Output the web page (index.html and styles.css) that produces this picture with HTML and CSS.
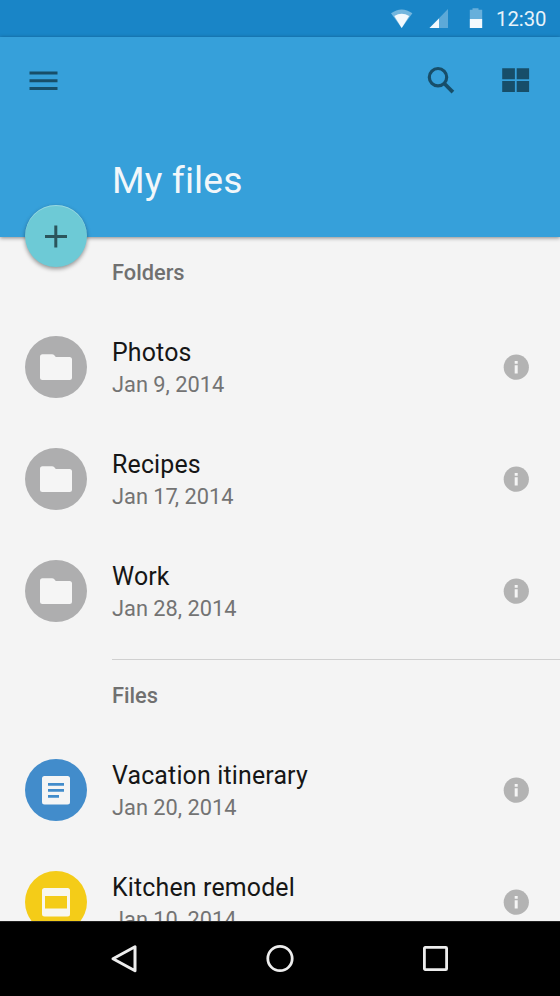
FILE: index.html
```html
<!DOCTYPE html>
<html lang="en">
<head>
<meta charset="utf-8">
<title>My files</title>
<link rel="stylesheet" href="styles.css">
</head>
<body>
<svg class="defs" aria-hidden="true">
  <symbol id="folder" viewBox="0 0 62 62"><path fill="#f5f5f5" d="M17.500 18.200h9.500q1.500 0 2.300 1l1.500 1.700H44.500q2.500 0 2.500 2.500v18.200q0 2.500-2.500 2.500H17.500q-2.500 0-2.500-2.500V20.700q0-2.500 2.500-2.500z"/></symbol>
  <symbol id="info" viewBox="0 0 26 26"><circle cx="13.300" cy="13.200" r="12.600" fill="#b3b3b3"/><path fill="#f5f5f5" d="M11.700 7h3v2.700h-3zM11.700 11.300h3v8.200h-3z"/></symbol>
</svg>
<div class="screen">
  <div class="status">
    <svg class="signals" width="96" height="37" viewBox="0 0 96 37">
      <path fill="#74b6de" d="M0 13.300Q10.700 5.500 21.400 13.300L10.700 28z"/>
      <path fill="#f3f9fd" d="M3.300 15.900Q10.700 11.500 18.200 15.900L10.700 28z"/>
      <path fill="#5ca9d8" d="M57 9v19H38.500z"/>
      <path fill="#f3f9fd" d="M48 18.500V28H38.500z"/>
      <path fill="#67afdb" d="M81.500 8.300h6v1.500h3.700V19H78.800V9.800h2.700z"/>
      <path fill="#f3f9fd" d="M78.800 19h12.400v9H78.800z"/>
    </svg>
    <span class="clock">12:30</span>
  </div>
  <header class="appbar">
    <div class="toolbar">
      <svg width="30" height="30" viewBox="0 0 30 30"><path fill="#174e69" d="M1.500 6.600h28v3h-28zM1.500 14.300h28v3h-28zM1.500 22h28v3h-28z"/></svg>
      <svg class="search" width="30" height="30" viewBox="0 0 30 30"><g fill="none" stroke="#174e69"><circle cx="13" cy="12.200" r="8.700" stroke-width="3.200"/><path stroke-width="3.800" d="M19.300 18.500l8.600 8.600"/></g></svg>
      <svg width="30" height="30" viewBox="0 0 30 30"><path fill="#174e69" d="M2.200 3.300h12.700v11H2.200zM16.700 3.300h12.400v11H16.700zM2.200 16h12.700v11H2.200zM16.700 16h12.400v11H16.700z"/></svg>
    </div>
    <h1>My files</h1>
    <div class="fab"><svg width="62" height="62" viewBox="0 0 62 62"><path fill="#2b555c" d="M29.300 20.400h3v9.500h9.700v3h-9.700v9.500h-3v-9.500H20v-3h9.300z"/></svg></div>
  </header>
  <main class="list">
    <h2>Folders</h2>
    <div class="row">
      <svg class="avatar grey"><use href="#folder"/></svg>
      <div class="label"><div class="name">Photos</div><div class="date">Jan 9, 2014</div></div>
      <svg class="info"><use href="#info"/></svg>
    </div>
    <div class="row">
      <svg class="avatar grey"><use href="#folder"/></svg>
      <div class="label"><div class="name">Recipes</div><div class="date">Jan 1<span class="kern">7</span>, 2014</div></div>
      <svg class="info"><use href="#info"/></svg>
    </div>
    <div class="row">
      <svg class="avatar grey"><use href="#folder"/></svg>
      <div class="label"><div class="name">Work</div><div class="date">Jan 28, 2014</div></div>
      <svg class="info"><use href="#info"/></svg>
    </div>
    <div class="divider"></div>
    <h2>Files</h2>
    <div class="row">
      <svg class="avatar blue" viewBox="0 0 62 62"><rect x="17" y="17" width="28" height="28.500" rx="2.500" fill="#f5f5f5"/><path fill="#428ccb" d="M23 24h16v2.700H23zM23 30h16v2.700H23zM23 36h11v2.700H23z"/></svg>
      <div class="label"><div class="name">Vacation itinerary</div><div class="date">Jan 20, 2014</div></div>
      <svg class="info"><use href="#info"/></svg>
    </div>
    <div class="row">
      <svg class="avatar yellow" viewBox="0 0 62 62"><rect x="17" y="17" width="28" height="28.500" rx="2.500" fill="#f8f7ef"/><path fill="#f4cc18" d="M20 25h22v12.500H20z"/></svg>
      <div class="label"><div class="name">Kitchen remodel</div><div class="date">Jan 10, 2014</div></div>
      <svg class="info"><use href="#info"/></svg>
    </div>
  </main>
  <nav class="navbar">
    <svg width="30" height="32" viewBox="0 0 30 32"><path fill="none" stroke="#ededed" stroke-width="3" stroke-linejoin="round" d="M26 3.800v24L4 15.800z"/></svg>
    <svg width="30" height="32" viewBox="0 0 30 32"><circle cx="15" cy="15.500" r="12.200" fill="none" stroke="#ededed" stroke-width="2.800"/></svg>
    <svg width="30" height="32" viewBox="0 0 30 32"><rect x="3.400" y="4.400" width="22.200" height="22.200" rx=".8" fill="none" stroke="#ededed" stroke-width="2.800"/></svg>
  </nav>
</div>
</body>
</html>
```

FILE: styles.css
```css
* { box-sizing: border-box; }
body { margin: 0; background: #f4f4f4; font-family: Roboto, sans-serif; }
svg { display: block; flex: none; }
h1, h2 { margin: 0; }
.defs { display: none; }
.screen { width: 560px; height: 996px; display: flex; flex-direction: column; overflow: hidden; }
.status { height: 37px; flex: none; display: flex; align-items: center; background: #1985c7; padding-left: 391px; }
.clock { margin-left: 9px; padding-top: 1px; font-size: 20.3px; line-height: 36px; color: #e8f3fa; white-space: nowrap; }
.appbar { position: relative; z-index: 1; height: 200px; flex: none; background: #36a0da; box-shadow: 0 1px 4px rgba(0, 0, 0, .45); }
.toolbar { display: flex; align-items: center; padding: 28px 30px 0 28px; }
.search { margin-left: auto; margin-right: 45px; }
h1 { padding: 63px 0 0 112px; font-size: 37.300px; line-height: 44px; font-weight: 400; letter-spacing: .12px; color: #f2f7fa; }
.fab { position: absolute; left: 25px; top: 168px; width: 62px; height: 62px; border-radius: 50%; background: #6dcad6; box-shadow: 0 2px 4px rgba(0, 0, 0, .4), inset 0 1px 0 rgba(255, 255, 255, .3); }
.list { flex: 1; min-height: 0; overflow: hidden; }
h2 { height: 74px; padding: 20px 0 0 112px; font-size: 21.800px; line-height: 32px; font-weight: 500; color: #707070; }
.row { height: 112px; display: flex; align-items: center; padding: 0 31px 0 25px; }
.avatar { width: 62px; height: 62px; border-radius: 50%; }
.grey { background: #aeaeaf; }
.blue { background: #428ccb; }
.yellow { background: #f4cc18; }
.label { flex: 1; margin-left: 25px; padding-top: 3px; line-height: 32px; white-space: nowrap; }
.name { font-size: 24.900px; letter-spacing: .17px; color: #161616; }
.date { font-size: 21.800px; color: #737373; }
.kern { letter-spacing: -3px; }
.info { width: 26px; height: 26px; }
.divider { height: 1px; margin: 12px 0 0 112px; background: #d0d0d0; }
.navbar { height: 75px; flex: none; display: flex; justify-content: center; align-items: center; gap: 126px; background: #000; border-top: 1px solid #222; }
```
